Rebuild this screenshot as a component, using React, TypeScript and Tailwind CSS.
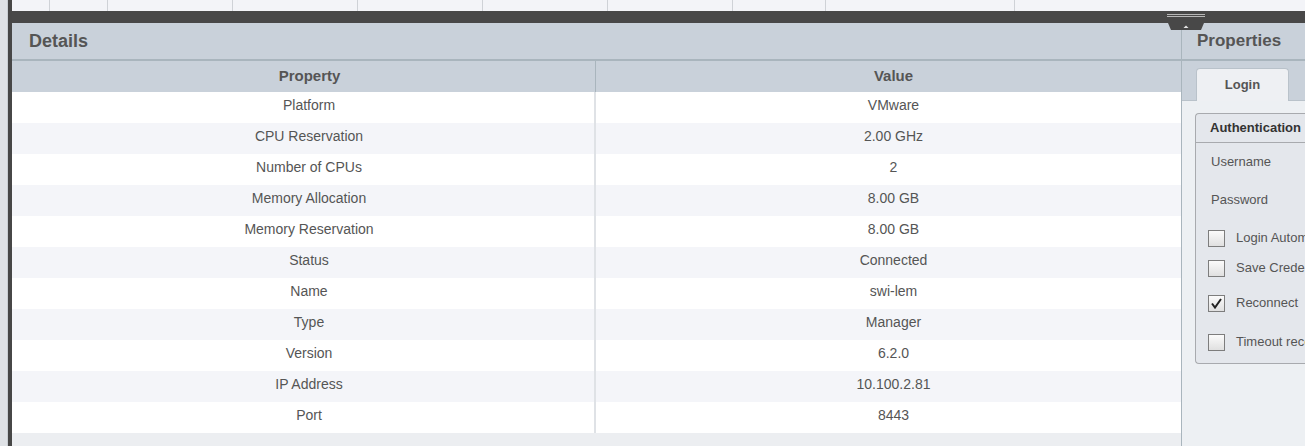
import React from "react";

const rows: [string, string][] = [
  ["Platform", "VMware"],
  ["CPU Reservation", "2.00 GHz"],
  ["Number of CPUs", "2"],
  ["Memory Allocation", "8.00 GB"],
  ["Memory Reservation", "8.00 GB"],
  ["Status", "Connected"],
  ["Name", "swi-lem"],
  ["Type", "Manager"],
  ["Version", "6.2.0"],
  ["IP Address", "10.100.2.81"],
  ["Port", "8443"],
];

const topCols = [38, 58, 125, 125, 125, 125, 125, 93, 189];

function Checkbox({ checked }: { checked?: boolean }) {
  return (
    <div className="w-[17px] h-[17px] border border-[#7d7d7d] bg-gradient-to-b from-[#fbfbfb] to-[#e0e0e0] flex items-center justify-center shrink-0">
      {checked && (
        <svg width="13" height="13" viewBox="0 0 13 13">
          <path d="M2 6.5 L5 10.5 L11 2" stroke="#222" strokeWidth="2" fill="none" />
        </svg>
      )}
    </div>
  );
}

export default function App() {
  return (
    <div className="flex h-[446px] w-[1305px] overflow-hidden font-['Liberation_Sans',Arial,sans-serif] text-[#555]">
      <div className="w-[8px] bg-[#dfe2e6] border-r border-[#c9ced3]" />
      <div className="w-[4px] bg-[#474747]" />
      <div className="flex-1 flex flex-col min-w-0">
        <div className="h-[11px] flex bg-[#f3f4f8]">
          {topCols.map((w, i) => (
            <div key={i} style={{ width: w }} className="h-full border-r border-[#cfd2d7] shrink-0" />
          ))}
        </div>
        <div className="h-[12px] bg-[#484848] relative">
          <svg className="absolute left-[1153px] top-[2px] z-10" width="42" height="18" viewBox="0 0 42 18">
            <line x1="2" y1="1.5" x2="40" y2="1.5" stroke="#b8b8b8" strokeWidth="1" />
            <line x1="2" y1="3.5" x2="40" y2="3.5" stroke="#b8b8b8" strokeWidth="1" />
            <path d="M3 10 L39 10 L36 17 L6 17 Z" fill="#484848" />
            <path d="M21 12.5 L23.5 15 L18.5 15 Z" fill="#e6e6e6" />
          </svg>
        </div>
        <div className="flex-1 flex min-h-0">
          {/* Details */}
          <div className="w-[1169px] flex flex-col shrink-0">
            <div className="h-[38px] bg-[#c9d1da] border-b-2 border-[#a9b5bd] flex items-center pl-[17px] shrink-0">
              <span className="text-[18px] font-bold text-[#555]">Details</span>
            </div>
            <div className="h-[31px] bg-[#c9d1da] flex text-[15px] font-bold shrink-0">
              <div className="w-[584px] flex items-center justify-center border-r border-[#a9b5bd] pl-[12px]">Property</div>
              <div className="flex-1 flex items-center justify-center pl-[10px]">Value</div>
            </div>
            {rows.map(([p, v], i) => (
              <div key={p} className={`h-[31px] flex text-[14px] text-[#555] shrink-0 ${i % 2 === 0 ? "bg-white" : "bg-[#f4f5f9]"}`}>
                <div className="w-[584px] flex items-center justify-center border-r-2 border-[#dfe2e6] pb-[4px] pl-[12px]">{p}</div>
                <div className="flex-1 flex items-center justify-center pb-[4px] pl-[10px]">{v}</div>
              </div>
            ))}
            <div className="flex-1 bg-[#eceef1]" />
          </div>
          {/* Properties */}
          <div className="flex-1 flex flex-col border-l border-[#a9b5bd] min-w-0 bg-[#edf0f3]">
            <div className="h-[38px] bg-[#c9d1da] border-b-2 border-[#a9b5bd] flex items-center pl-[15px] shrink-0">
              <span className="text-[17px] font-bold text-[#555] whitespace-nowrap">Properties</span>
            </div>
            <div className="h-[40px] bg-[#c9d1da] border-b border-[#b9c2ca] flex items-end pl-[14px] shrink-0">
              <div className="w-[93px] h-[33px] bg-[#eef0f3] border border-b-0 border-[#b9c2ca] rounded-t-[4px] flex items-center justify-center text-[13px] font-bold mb-[-1px]">
                Login
              </div>
            </div>
            <div className="pl-[13px] pt-[12px]">
              <div className="w-[140px] h-[251px] border border-[#a8aaae] border-r-0 rounded-l-[4px] bg-[#e4e7ec] flex flex-col text-[13px] whitespace-nowrap overflow-hidden">
                <div className="h-[29px] border-b border-[#a8aaae] flex items-center pl-[14px] font-bold text-[13px] text-[#333] shrink-0">Authentication</div>
                <div className="h-[38px] flex items-center pl-[15px] shrink-0">Username</div>
                <div className="h-[38px] flex items-center pl-[15px] shrink-0">Password</div>
                <div className="h-[38px] flex items-center pl-[12px] gap-[11px] shrink-0">
                  <Checkbox />
                  <span>Login Automatically</span>
                </div>
                <div className="h-[22px] flex items-center pl-[12px] gap-[11px] shrink-0">
                  <Checkbox />
                  <span>Save Credentials</span>
                </div>
                <div className="h-[48px] flex items-center pl-[12px] gap-[11px] shrink-0">
                  <Checkbox checked />
                  <span>Reconnect</span>
                </div>
                <div className="h-[30px] flex items-center pl-[12px] gap-[11px] shrink-0">
                  <Checkbox />
                  <span>Timeout reconnect</span>
                </div>
              </div>
            </div>
          </div>
        </div>
      </div>
    </div>
  );
}
